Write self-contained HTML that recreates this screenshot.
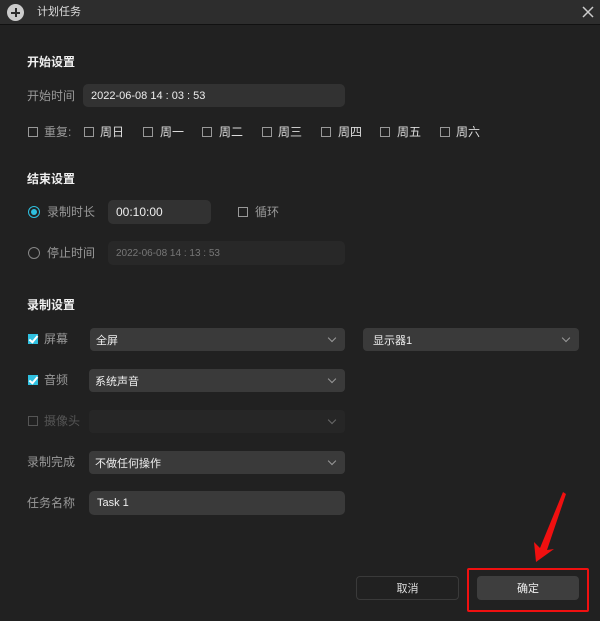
<!DOCTYPE html>
<html><head><meta charset="utf-8"><style>
*{margin:0;padding:0;box-sizing:border-box}
body{width:600px;height:621px;background:#212121;position:relative;overflow:hidden;font-family:"Liberation Sans","Noto Sans CJK SC",sans-serif;font-size:12px;color:#bdbdbd}
.a{position:absolute;white-space:nowrap;line-height:14px}
.h{color:#f0f0f0;font-weight:bold}
.in{position:absolute;background:#323232;border-radius:5px;color:#eee;padding-left:8px;display:flex;align-items:center;font-size:11px}
.sel{position:absolute;background:#3a3a3a;border-radius:4px;color:#eee;padding-left:6px;display:flex;align-items:center;font-size:11px}
.sel:after{content:"";position:absolute;right:10px;top:7px;width:5px;height:5px;border-right:1px solid #999;border-bottom:1px solid #999;transform:rotate(45deg)}
.cb{position:absolute;width:10px;height:10px;border:1px solid #999}
.ck{position:absolute;width:10px;height:10px;background:#2fc0e0}
.ck:after{content:"";position:absolute;left:3px;top:0px;width:3px;height:7px;border-right:2px solid #fff;border-bottom:2px solid #fff;transform:rotate(40deg)}
</style></head><body>
<div style="position:absolute;left:0;top:0;width:600px;height:25px;background:#2d2d2d;border-bottom:1px solid #111"></div>
<div style="position:absolute;left:7px;top:4px;width:17px;height:17px;border-radius:50%;background:#ccc"></div>
<div style="position:absolute;left:11px;top:11.5px;width:9px;height:2px;background:#2d2d2d"></div>
<div style="position:absolute;left:14.5px;top:8px;width:2px;height:9px;background:#2d2d2d"></div>
<div class="a" style="left:37px;top:5px;color:#ddd;font-size:11px">计划任务</div>
<svg style="position:absolute;left:582px;top:6px" width="12" height="12"><path d="M1 1L11 11M11 1L1 11" stroke="#ccc" stroke-width="1.5"/></svg>

<div class="a h" style="left:27px;top:55px">开始设置</div>
<div class="a" style="left:27px;top:89px;color:#999">开始时间</div>
<div class="in" style="left:83px;top:84px;width:262px;height:23px">2022-06-08 14 : 03 : 53</div>
<div class="cb" style="left:28px;top:127px"></div><div class="a" style="left:44px;top:125px;color:#999">重复:</div>
<div class="cb" style="left:84px;top:127px"></div><div class="a" style="left:100px;top:125px;color:#ddd">周日</div>
<div class="cb" style="left:143px;top:127px"></div><div class="a" style="left:160px;top:125px;color:#ddd">周一</div>
<div class="cb" style="left:202px;top:127px"></div><div class="a" style="left:219px;top:125px;color:#ddd">周二</div>
<div class="cb" style="left:262px;top:127px"></div><div class="a" style="left:278px;top:125px;color:#ddd">周三</div>
<div class="cb" style="left:321px;top:127px"></div><div class="a" style="left:338px;top:125px;color:#ddd">周四</div>
<div class="cb" style="left:380px;top:127px"></div><div class="a" style="left:397px;top:125px;color:#ddd">周五</div>
<div class="cb" style="left:440px;top:127px"></div><div class="a" style="left:456px;top:125px;color:#ddd">周六</div>

<div class="a h" style="left:27px;top:172px">结束设置</div>
<div style="position:absolute;left:28px;top:206px;width:12px;height:12px;border-radius:50%;border:1px solid #2fc0e0"></div>
<div style="position:absolute;left:31px;top:209px;width:6px;height:6px;border-radius:50%;background:#2fc0e0"></div>
<div class="a" style="left:47px;top:205px;color:#999">录制时长</div>
<div class="in" style="left:108px;top:200px;width:103px;height:24px;font-size:12px">00:10:00</div>
<div class="cb" style="left:238px;top:207px"></div><div class="a" style="left:255px;top:205px;color:#999">循环</div>
<div style="position:absolute;left:28px;top:247px;width:12px;height:12px;border-radius:50%;border:1px solid #888"></div>
<div class="a" style="left:47px;top:246px;color:#999">停止时间</div>
<div class="in" style="left:108px;top:241px;width:237px;height:24px;background:#282828;color:#777;font-size:10px">2022-06-08 14 : 13 : 53</div>

<div class="a h" style="left:27px;top:298px">录制设置</div>
<div class="ck" style="left:28px;top:334px"></div><div class="a" style="left:44px;top:332px;color:#999">屏幕</div>
<div class="sel" style="left:90px;top:328px;width:255px;height:23px">全屏</div>
<div class="sel" style="left:363px;top:328px;width:216px;height:23px;padding-left:10px">显示器1</div>
<div class="ck" style="left:28px;top:375px"></div><div class="a" style="left:44px;top:373px;color:#999">音频</div>
<div class="sel" style="left:89px;top:369px;width:256px;height:23px">系统声音</div>
<div class="cb" style="left:28px;top:416px;border-color:#555"></div><div class="a" style="left:44px;top:414px;color:#555">摄像头</div>
<div class="sel" style="left:89px;top:410px;width:256px;height:23px;background:#2a2a2a;opacity:.6"></div>
<div class="a" style="left:27px;top:455px;color:#999">录制完成</div>
<div class="sel" style="left:89px;top:451px;width:256px;height:23px">不做任何操作</div>
<div class="a" style="left:27px;top:496px;color:#999">任务名称</div>
<div class="in" style="left:89px;top:491px;width:256px;height:24px;background:#3a3a3a">Task 1</div>

<div style="position:absolute;left:356px;top:576px;width:103px;height:24px;border:1px solid #3a3a3a;border-radius:4px;color:#ddd;font-size:11px;display:flex;align-items:center;justify-content:center">取消</div>
<div style="position:absolute;left:477px;top:576px;width:102px;height:24px;background:#3e3e3e;border-radius:4px;color:#eee;font-size:11px;display:flex;align-items:center;justify-content:center">确定</div>
<div style="position:absolute;left:467px;top:568px;width:122px;height:44px;border:2px solid #f01010;border-radius:2px"></div>
<svg style="position:absolute;left:0;top:0" width="600" height="621"><polygon points="563,492 566,494 547,550 554,549 536,562 534,542 540,548" fill="#f01010"/></svg>
</body></html>
